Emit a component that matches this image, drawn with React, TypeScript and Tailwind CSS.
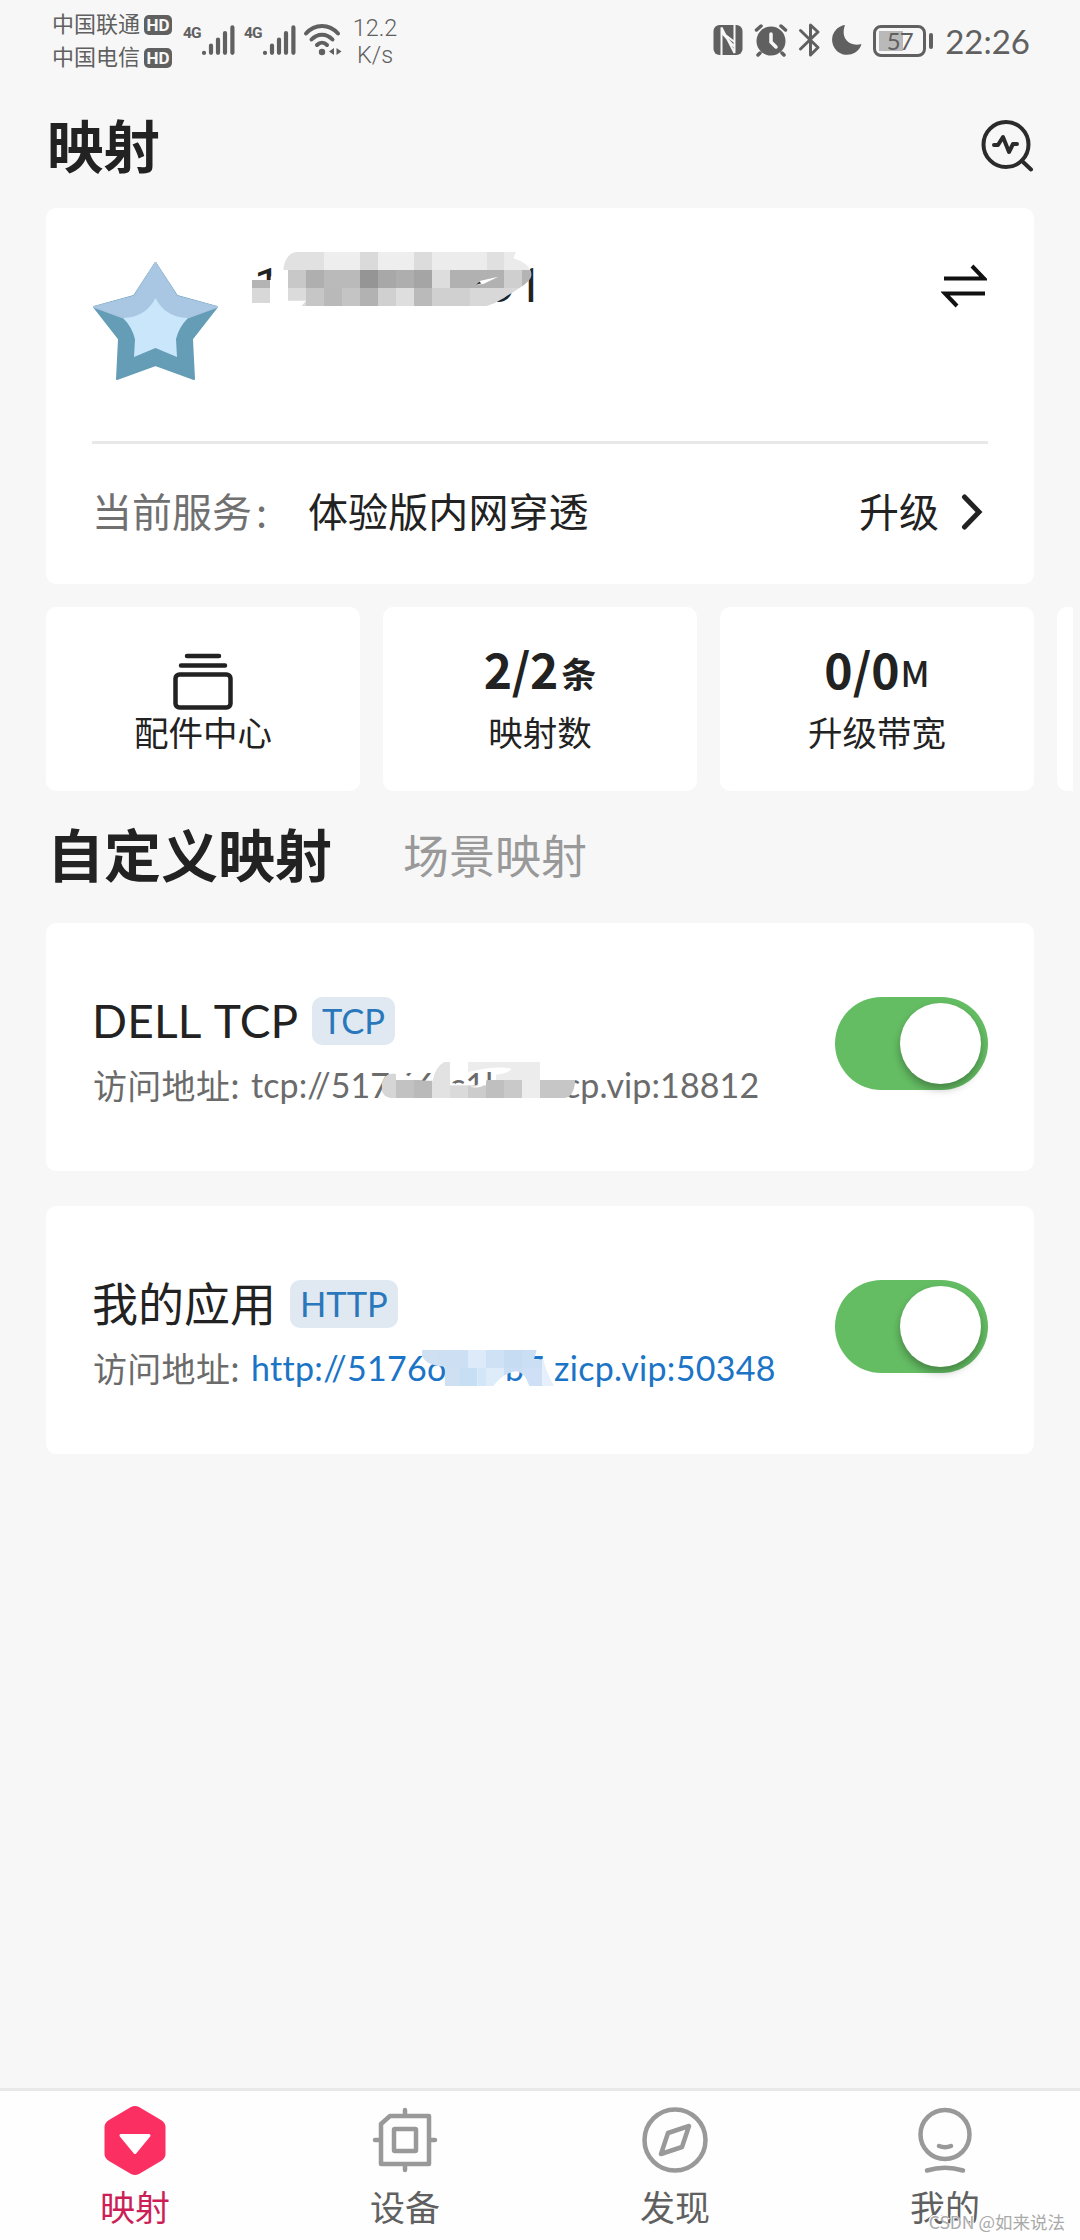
import { useState } from 'react';
import type { ReactNode } from 'react';

type Cell = [x: number, y: number, width: number, height: number, fill: string];

const accountCells: Cell[] = [
  [180, 66, 132, 54, '#e1e1e1'],
  [312, 66, 108, 54, '#eeeeee'],
  [420, 66, 54, 54, '#dadada'],
  [474, 66, 108, 54, '#eeeeee'],
  [582, 66, 54, 54, '#dcdcdc'],
  [636, 66, 164, 54, '#ececec'],
  [800, 66, 54, 54, '#e0e0e0'],
  [854, 66, 90, 54, '#ebebeb'],
  [204, 120, 54, 54, '#c8c8c8'],
  [258, 120, 54, 54, '#afafaf'],
  [312, 120, 108, 54, '#bababa'],
  [420, 120, 54, 54, '#959595'],
  [474, 120, 54, 54, '#a8a8a8'],
  [528, 120, 54, 54, '#aeaeae'],
  [582, 120, 54, 54, '#a5a5a5'],
  [636, 120, 54, 54, '#dddddd'],
  [690, 120, 162, 54, '#b1b1b1'],
  [852, 120, 54, 54, '#cfcfcf'],
  [906, 120, 40, 54, '#b4b4b4'],
  [204, 174, 54, 54, '#dbdbdb'],
  [258, 174, 54, 54, '#c6c6c6'],
  [312, 174, 54, 54, '#b9b9b9'],
  [366, 174, 54, 54, '#c4c4c4'],
  [420, 174, 54, 54, '#b2b2b2'],
  [474, 174, 54, 54, '#d0d0d0'],
  [528, 174, 54, 54, '#dedede'],
  [582, 174, 54, 54, '#bababa'],
  [636, 174, 114, 54, '#d0d0d0'],
  [750, 174, 190, 54, '#d8d8d8'],
];

const tcpCells: Cell[] = [
  [125, 100, 43, 74, '#d6d6d6'],
  [168, 120, 54, 54, '#c2c2c2'],
  [222, 120, 54, 54, '#bababa'],
  [276, 60, 54, 114, '#e2e2e2'],
  [330, 136, 54, 38, '#dadada'],
  [384, 136, 54, 38, '#cccccc'],
  [438, 120, 54, 54, '#bfbfbf'],
  [492, 120, 54, 54, '#c9c9c9'],
  [546, 120, 54, 54, '#ededed'],
  [600, 120, 110, 54, '#c6c6c6'],
];

const httpCells: Cell[] = [
  [60, 60, 54, 54, '#cfe0f3'],
  [114, 60, 90, 54, '#cde0f3'],
  [204, 60, 54, 54, '#dceaf9'],
  [258, 60, 54, 54, '#cfe2f5'],
  [312, 60, 54, 54, '#c6dcf3'],
  [366, 60, 60, 54, '#cbdff4'],
  [135, 114, 45, 54, '#cfe0f3'],
  [180, 114, 52, 54, '#c6dff2'],
  [232, 114, 26, 54, '#d3e6f8'],
  [258, 114, 54, 54, '#deecfa'],
  [312, 114, 54, 54, '#c9def5'],
  [366, 114, 60, 54, '#cfe0f6'],
  [426, 84, 40, 84, '#e6effb'],
];

function Cells({ cells }: { cells: Cell[] }) {
  return (
    <>
      {cells.map(([x, y, width, height, fill]) => (
        <rect key={`${x}-${y}`} x={x} y={y} width={width} height={height} fill={fill} />
      ))}
    </>
  );
}

function Signal() {
  return (
    <div className="flex items-start">
      <span className="mt-[1px] w-[18px] font-['Roboto',sans-serif] text-[15.500px] leading-none font-bold tracking-tighter">
        4G
      </span>
      <svg className="w-[34px] h-[30px]" viewBox="0 0 34 30" stroke="#606060" strokeWidth="4.2" strokeLinecap="round">
        <path d="M3 27.800V27.900M10 20.500V27.800M17 14.500V27.800M24 8V27.800M31.400 2.400V27.800" />
      </svg>
    </div>
  );
}

function StatusBar() {
  return (
    <div className="h-20 pl-[52px] pr-[50px] flex justify-between text-[#606060]">
      <div className="flex">
        <div className="pt-[7px] w-[131px]">
          {['中国联通', '中国电信'].map((carrier) => (
            <div key={carrier} className="h-[33px] flex items-center gap-1 text-[22px] leading-none">
              <span className="mb-[3px]">{carrier}</span>
              <span className="mt-[2px] w-7 h-5 rounded-[5px] bg-[#606060] text-[#f7f7f7] text-[17px] leading-5 font-bold text-center font-['Roboto',sans-serif]">
                HD
              </span>
            </div>
          ))}
        </div>
        <div className="pt-[25px] flex gap-[9px]">
          <Signal />
          <Signal />
        </div>
        <svg className="mt-6 ml-[7px] w-10 h-8" viewBox="0 0 40 32" fill="none" stroke="#606060" strokeWidth="4" strokeLinecap="round">
          <path d="M3 9.500C12-.5 26-.5 35 9.500M8.500 15.500C14.500 9 23.500 9 29.500 15.500M14 21C17 18 21 18 24 21" />
          <circle cx="19" cy="28" r="3.200" fill="#606060" stroke="none" />
          <path d="M31 24v7l-5-3.500zM33.500 24v7l5-3.500z" fill="#606060" stroke="none" />
        </svg>
        <div className="pt-[15px] ml-[8px] w-12 text-center font-['Roboto',sans-serif] text-[23.500px] leading-[27px] font-light">
          <div>12.2</div>
          <div>K/s</div>
        </div>
      </div>
      <div className="flex items-start pt-[22px]">
        <svg className="w-[31px] h-9" viewBox="0 0 31 36">
          <rect x="0.500" y="3" width="29" height="30" rx="6" fill="#606060" />
          <path d="M8.500 33V5.500L21.500 31V3M10 12L21.500 25M8.500 10L21.500 20" fill="none" stroke="#f7f7f7" strokeWidth="2" />
        </svg>
        <svg className="ml-[10px] w-[34px] h-9" viewBox="0 0 34 36" fill="none" stroke="#606060" strokeWidth="3.500" strokeLinecap="round">
          <circle cx="17" cy="19" r="14.500" fill="#606060" stroke="none" />
          <path d="M2.500 8L7 4M31.500 8L27 4M6 31l-2 2M28 31l2 2" />
          <path d="M17 12v8l5 5" stroke="#f7f7f7" />
        </svg>
        <svg className="ml-[10px] w-6 h-9" viewBox="0 0 24 36" fill="none" stroke="#606060" strokeWidth="3" strokeLinecap="round" strokeLinejoin="round">
          <path d="M2.500 8.500L20 25.500L12.500 33V3L20 10L2.500 27" />
        </svg>
        <svg className="ml-[10px] w-[31px] h-9" viewBox="0 0 31 36">
          <path d="M13 3A15 15 0 1 0 29.500 22C18 25 8 17 13 3Z" fill="#606060" />
        </svg>
        <div className="ml-[10px] mt-[3px] relative flex items-center">
          <div className="w-[53px] h-8 border-[3px] border-[#606060] rounded-[8px] p-[3px]">
            <div className="w-6 h-5 bg-[#b9b9b9]" />
          </div>
          <span className="absolute inset-y-0 left-0 w-[53px] text-center text-[24px] leading-8 font-['Lato',sans-serif] tracking-[-1px]">57</span>
          <div className="ml-[3px] w-1 h-4 rounded-sm bg-[#606060]" />
        </div>
        <span className="ml-[12px] mt-[3px] text-[33px] leading-8 font-['Lato',sans-serif]">22:26</span>
      </div>
    </div>
  );
}

function StarLogo() {
  return (
    <svg className="w-[125px] h-[118px]" viewBox="0 0 125 118" strokeLinejoin="round">
      <path
        d="M62.500 1L84 34L124 45L99 77L101 117L62.500 103L24 117L26 77L1 45L41 34Z"
        fill="#649db5"
        stroke="#649db5"
        strokeWidth="2"
      />
      <path d="M62.500 0L84 34L125 45L95 56Q74 56 62.500 37Q51 56 30 56L0 45L41 34Z" fill="#a9c6e2" stroke="#a9c6e2" />
      <path d="M62.500 36Q72 55 95 56Q86 65 83 77L84 95L62.500 86L41 95L42 77Q39 65 30 56Q53 55 62.500 36Z" fill="#c9e6fb" />
    </svg>
  );
}

function Stat({ label, children }: { label: string; children: ReactNode }) {
  return (
    <div className="w-[314px] h-[184px] shrink-0 bg-white rounded-[10px] flex flex-col items-center">
      <div className="h-[103px] flex items-end">{children}</div>
      <div className="text-[34.500px] leading-[46px] -mt-[2px] text-[#222222]">{label}</div>
    </div>
  );
}

function Toggle({ on, onChange }: { on: boolean; onChange: () => void }) {
  return (
    <button
      role="switch"
      aria-checked={on}
      onClick={onChange}
      className={`w-[153px] h-[93px] p-[6px] rounded-full flex shrink-0 ${on ? 'bg-[#64bd63] justify-end pr-[7px]' : 'bg-gray-300'}`}
    >
      <span className="size-[81px] rounded-full bg-white shadow-[0_5px_8px_rgba(0,0,0,0.3)]" />
    </button>
  );
}

interface MappingProps {
  name: ReactNode;
  type: string;
  address: ReactNode;
  mosaic: ReactNode;
}

function MappingCard({ name, type, address, mosaic }: MappingProps) {
  const [on, setOn] = useState(true);

  return (
    <div className="relative h-[248px] bg-white rounded-[10px] pl-[47px] pr-[46px] flex items-start justify-between">
      <div className="pt-[69px] whitespace-nowrap">
        <div className="h-[58px] flex items-center text-[46px] leading-[58px] text-[#222222]">
          {name}
          <span className="h-12 px-[10px] rounded-[10px] bg-[#e0e9f1] text-[#2a78bb] text-[34.500px] leading-[47px] font-['Lato',sans-serif]">
            {type}
          </span>
        </div>
        <div className="mt-[12px] h-[46px] flex items-center text-[34px] leading-[46px] text-[#6b6b6b]">
          <span className="w-[158px] tracking-[0.3px]">访问地址:</span>
          {address}
        </div>
      </div>
      <div className="pt-[74px]">
        <Toggle on={on} onChange={() => setOn(!on)} />
      </div>
      {mosaic}
    </div>
  );
}

const navItems = [
  {
    label: '映射',
    active: true,
    icon: (
      <>
        <path d="M31 2Q35 0 39 2L61 15Q65.500 18 65.500 22V49Q65.500 53 61 56L39 69Q35 71 31 69L9 56Q4.500 53 4.500 49V22Q4.500 18 9 15Z" fill="#fc2f63" stroke="none" />
        <path d="M21 30.500H49L35 47.500Z" fill="#fff" stroke="#fff" strokeWidth="3" />
      </>
    ),
  },
  {
    label: '设备',
    icon: (
      <>
        <path d="M20 11H59V59H11V19ZM35 5V11M35 59V65M5 35H11M59 35H65" />
        <rect x="24" y="24" width="22" height="22" rx="1" />
      </>
    ),
  },
  {
    label: '发现',
    icon: (
      <>
        <circle cx="35" cy="35" r="30.500" />
        <path d="M49 21L42 42L21 49L28 28Z" />
      </>
    ),
  },
  {
    label: '我的',
    icon: (
      <>
        <circle cx="35" cy="29.500" r="24.500" />
        <path d="M29 41Q35 43.500 41 41M17 65.500Q35 60 53 65.500" />
      </>
    ),
  },
];

export default function App() {
  return (
    <div className="w-[1080px] h-[2240px] bg-[#f7f7f7] flex flex-col font-['Noto_Sans_CJK_SC',sans-serif] text-[#222222]">
      <StatusBar />

      <header className="h-[128px] pb-[1px] pl-[47px] pr-[46px] flex items-center justify-between">
        <h1 className="text-[56.500px] leading-none font-bold">映射</h1>
        <svg className="mt-[5px] w-[54px] h-[54px]" viewBox="0 0 54 54" fill="none" stroke="#2b2b2b" strokeWidth="4" strokeLinecap="round" strokeLinejoin="round">
          <circle cx="26" cy="25.500" r="22.500" />
          <path d="M42 42L51 50.500M14 26H18L23 18L29 33L33 25H37" />
        </svg>
      </header>

      <section className="relative mx-[46px] h-[376px] bg-white rounded-[10px] px-[46px]">
        <div className="h-[233px] flex items-start pt-[54px]">
          <div className="ml-[1px]">
            <StarLogo />
          </div>
          <div className="ml-[36px] -mt-[6px] w-[289px] flex justify-between font-['Roboto',sans-serif] text-[48px] leading-[60px]">
            <span>1</span>
            <span>91</span>
          </div>
          <svg className="ml-auto mr-[1px] mt-[2px] w-[46px] h-[44px]" viewBox="0 0 46 44" fill="none" stroke="#111111" strokeWidth="4">
            <path d="M3 14.500H43L31 2M44 29.500H4L16 42" />
          </svg>
        </div>
        <div className="h-[3px] bg-[#e8e8e8]" />
        <div className="h-[131px] flex items-center text-[40px]">
          <span className="w-[216px] text-[#707070]">
            当前服务<span className="ml-[4px]">:</span>
          </span>
          <span className="tracking-[0.1px]">体验版内网穿透</span>
          <span className="ml-auto">升级</span>
          <svg className="mt-[5px] ml-[22px] mr-[5px] w-[22px] h-[38px]" viewBox="0 0 22 38" fill="none" stroke="#222222" strokeWidth="5" strokeLinecap="round">
            <path d="M3.500 4L18 19L3.500 34" />
          </svg>
        </div>
        <svg className="absolute left-[174px] top-[22px] w-[360px] h-[110px]" viewBox="0 0 1080 330">
          <clipPath id="account">
            <path d="M190 115C195 85 210 66 232 66H888L880 85C915 95 935 115 935 135C930 160 895 175 850 205Q825 222 800 228H245L258 212H190Z" />
          </clipPath>
          <path d="M90 150H152V140L190 112V66H915V150L850 205H830V230H90Z" fill="#fff" />
          <rect x="96" y="150" width="54" height="24" fill="#b4b4b4" />
          <rect x="96" y="174" width="54" height="45" fill="#d8d8d8" />
          <g clipPath="url(#account)">
            <Cells cells={accountCells} />
          </g>
          <path d="M768 164L782 152L835 140L790 162Z" fill="#fff" />
          <path d="M768 164L778 155L784 160Z" fill="#222222" />
        </svg>
      </section>

      <section className="mt-[23px] ml-[46px] mr-[7px] flex gap-[23px] overflow-hidden">
        <Stat label="配件中心">
          <svg className="w-[60px] h-[58px]" viewBox="0 0 60 58" fill="none" stroke="#222222" strokeWidth="4.500" strokeLinecap="round">
            <path d="M14 4H46M8 13.500H52" />
            <rect x="2.500" y="22.500" width="55" height="33" rx="4" />
          </svg>
        </Stat>
        <Stat label="映射数">
          <span className="text-[48px] leading-[83px] font-bold tracking-[-0.3px]">2/2</span>
          <span className="ml-[3px] text-[35px] leading-[75px] font-bold">条</span>
        </Stat>
        <Stat label="升级带宽">
          <span className="text-[48px] leading-[83px] font-bold">0/0</span>
          <span className="ml-[1px] text-[35px] leading-[77px] font-medium">M</span>
        </Stat>
        <div className="w-[314px] h-[184px] shrink-0 bg-white rounded-[10px]" />
      </section>

      <div className="h-[132px] pb-[10px] pl-[47px] flex items-center">
        <h2 className="text-[57px] leading-none font-bold">自定义映射</h2>
        <span className="ml-[71px] mt-[1px] text-[46px] leading-none text-[#999999]">场景映射</span>
      </div>

      <main className="mx-[46px] flex flex-col gap-[35px]">
        <MappingCard
          name={
            <span className="w-[219px] -ml-[1px] mr-[1px] font-['Lato',sans-serif] tracking-[0.2px] [word-spacing:3px]">
              DELL TCP
            </span>
          }
          type="TCP"
          address={
            <span className="flex font-['Lato',sans-serif] tracking-[0.1px] leading-[50px]">
              <span className="w-[145px]">tcp://517</span>
              <span className="w-[53px]">66</span>
              <span className="w-[115px]">c1b</span>
              <span>cp.vip:18812</span>
            </span>
          }
          mosaic={
            <svg className="absolute left-[294px] top-[117px] w-[300px] h-[110px]" viewBox="0 0 900 330">
              <clipPath id="tcp">
                <path d="M135 110Q155 92 185 108Q240 125 278 122Q285 82 312 66H600V120H706Q702 174 670 174H160Q120 174 125 130Z" />
              </clipPath>
              <path d="M140 120L185 98L240 125L345 130V174H140ZM345 136L400 140L440 120V174H345ZM470 66H600V120H680V174H438V120H470Z" fill="#fff" />
              <g clipPath="url(#tcp)">
                <Cells cells={tcpCells} />
              </g>
              <path d="M384 66H600V120H468V104Q505 100 515 86Q470 76 384 96Z" fill="#ececec" />
              <path d="M384 138Q402 142 418 136Q425 122 440 120L436 132Q416 150 384 138Z" fill="#fff" />
            </svg>
          }
        />
        <MappingCard
          name={
            <span className="w-[197px] -ml-[1px] mr-[1px] mb-[6px] text-[46px]">我的应用</span>
          }
          type="HTTP"
          address={
            <span className="flex font-['Lato',sans-serif] tracking-[0.3px] leading-[50px] text-[#1b74c5]">
              <span className="w-[202px]">http://5176o</span>
              <span className="w-[101px] pl-[52px]">b7</span>
              <span>zicp.vip:50348</span>
            </span>
          }
          mosaic={
            <svg className="absolute left-[354px] top-[124px] w-[180px] h-[80px]" viewBox="0 0 540 240">
              <clipPath id="http">
                <path d="M66 60H410L402 88H430Q440 130 462 168H388Q375 128 350 124Q310 128 280 168H135V110Q80 108 66 78Z" />
              </clipPath>
              <g clipPath="url(#http)">
                <Cells cells={httpCells} />
              </g>
            </svg>
          }
        />
      </main>

      <nav className="relative mt-auto h-[152px] border-t-[3px] border-[#e8e8e8] bg-[#fefefe] grid grid-cols-4">
        {navItems.map((item) => (
          <div key={item.label} className="flex flex-col items-center pt-[14px]">
            <svg className="w-[70px] h-[70px]" viewBox="0 0 70 70" fill="none" stroke="#999999" strokeWidth="4.500" strokeLinecap="round" strokeLinejoin="round">
              {item.icon}
            </svg>
            <span className={`mt-[8px] text-[35px] leading-[46px] ${item.active ? 'text-[#cc1f58]' : 'text-[#606060]'}`}>
              {item.label}
            </span>
          </div>
        ))}
        <span className="absolute right-[15px] bottom-[6px] text-[17.500px] leading-6 text-[#aaaaaa] [text-shadow:1px_1px_0_#ffffff,-1px_-1px_0_#ffffff]">
          CSDN @如来说法
        </span>
      </nav>
    </div>
  );
}
